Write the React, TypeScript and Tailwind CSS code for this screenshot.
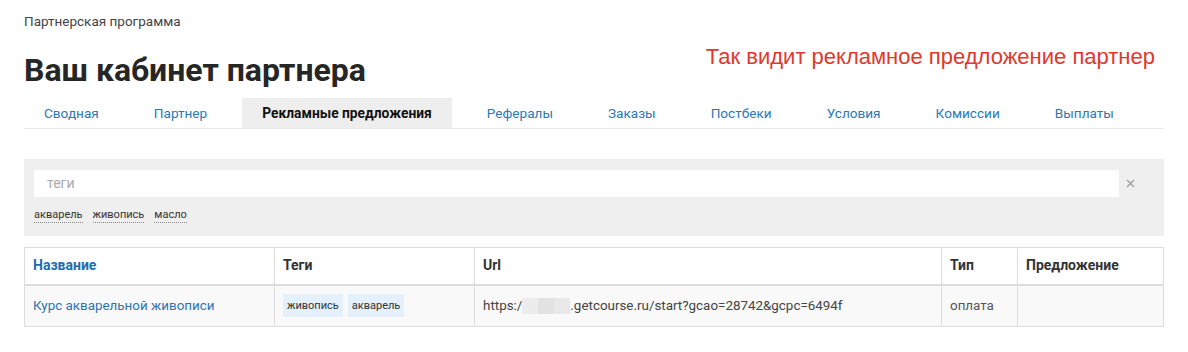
import React from "react";

const TABS = [
  "Сводная",
  "Партнер",
  "Рекламные предложения",
  "Рефералы",
  "Заказы",
  "Постбеки",
  "Условия",
  "Комиссии",
  "Выплаты",
];

const FILTER_TAGS = ["акварель", "живопись", "масло"];

export default function App() {
  return (
    <div className="w-[1188px] h-[352px] bg-white font-['Roboto',sans-serif] text-[#333]">
      <div className="px-6 pt-[13px]">
        <div className="text-[13.5px] leading-[16px] text-[#444]">Партнерская программа</div>

        <div className="flex items-start justify-between mt-[15px]">
          <h1 className="text-[32px] leading-[40px] font-bold text-[#262626] mt-[6px]">Ваш кабинет партнера</h1>
          <div className="font-['Liberation_Sans',Arial,sans-serif] text-[22px] leading-[26px] text-[#e0382c] mr-[9px]">
            Так видит рекламное предложение партнер
          </div>
        </div>

        {/* tabs */}
        <div className="flex gap-[15px] border-b border-[#eaeaea] mt-[8px]">
          {TABS.map((t, i) =>
            i === 2 ? (
              <div key={t} className="px-5 h-[30px] flex items-center bg-[#eeeeee] text-[13.8px] font-bold text-[#111]">
                {t}
              </div>
            ) : (
              <div key={t} className="px-5 h-[30px] flex items-center text-[13.6px] text-[#2b78b6]">
                {t}
              </div>
            )
          )}
        </div>

        {/* filter */}
        <div className="mt-[30px] bg-[#efefef] h-[77px] px-[10px] pt-[11px]">
          <div className="flex items-center">
            <div className="flex-1 h-[27px] bg-white flex items-center px-[13px] text-[14px] text-[#aaa]">теги</div>
            <div className="w-[35px] flex pl-[7px]">
              <svg width="9" height="9" viewBox="0 0 9 9">
                <path d="M1 1L8 8M8 1L1 8" stroke="#999" strokeWidth="1.1" />
              </svg>
            </div>
          </div>
          <div className="flex gap-[10px] mt-[11px]">
            {FILTER_TAGS.map((t) => (
              <span key={t} className="text-[11px] leading-[14px] text-[#333] border-b border-dotted border-[#888]">
                {t}
              </span>
            ))}
          </div>
        </div>

        {/* table */}
        <table className="mt-[11px] w-full border-collapse text-[14px]">
          <thead>
            <tr className="h-[37px]">
              <th className="w-[250px] border border-[#dddddd] border-b-2 text-left px-[8px] font-bold text-[#1b6db0]">Название</th>
              <th className="w-[200px] border border-[#dddddd] border-b-2 text-left px-[8px] font-bold">Теги</th>
              <th className="w-[467px] border border-[#dddddd] border-b-2 text-left px-[8px] font-bold">Url</th>
              <th className="w-[76px] border border-[#dddddd] border-b-2 text-left px-[8px] font-bold">Тип</th>
              <th className="border border-[#dddddd] border-b-2 text-left px-[8px] font-bold">Предложение</th>
            </tr>
          </thead>
          <tbody>
            <tr className="h-[42px] bg-[#f9f9f9]">
              <td className="border border-[#dddddd] px-[8px] text-[13.4px] text-[#2f73ad]">Курс акварельной живописи</td>
              <td className="border border-[#dddddd] px-[8px]">
                <div className="flex gap-[5px]">
                  <span className="bg-[#e4f0fc] px-[4px] h-[23px] flex items-center text-[11px] text-[#333]">живопись</span>
                  <span className="bg-[#e4f0fc] px-[4px] h-[23px] flex items-center text-[11px] text-[#333]">акварель</span>
                </div>
              </td>
              <td className="border border-[#dddddd] px-[8px] text-[13.4px] text-[#444]">
                <span className="inline-flex items-center">
                  https:/
                  <span className="inline-flex h-[16px] w-[48px]">
                    <span className="flex-1 bg-[#ececec]" />
                    <span className="flex-1 bg-[#e2e2e2]" />
                    <span className="flex-1 bg-[#e8e8e8]" />
                  </span>
                  .getcourse.ru/start?gcao=28742&amp;gcpc=6494f
                </span>
              </td>
              <td className="border border-[#dddddd] px-[8px] text-[13.4px] text-[#555]">оплата</td>
              <td className="border border-[#dddddd] px-[8px]" />
            </tr>
          </tbody>
        </table>
      </div>
    </div>
  );
}
